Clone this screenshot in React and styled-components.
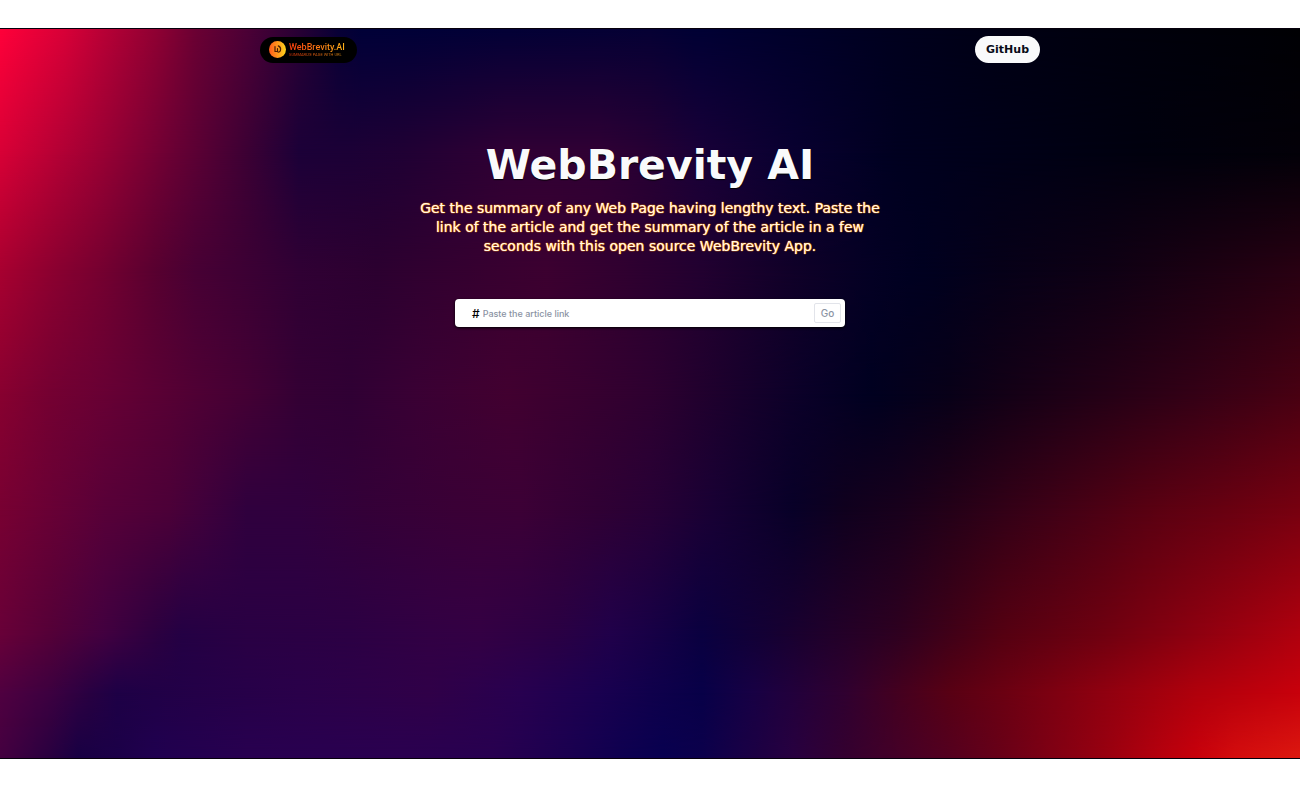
import React from 'react'
import { useState } from "react";
import styled, { createGlobalStyle } from 'styled-components'


const GlobalStyle = createGlobalStyle`
  * {
    box-sizing: border-box;
  }
  body {
    margin: 0;
    background-color: #ffffff;
    font-family: "DejaVu Sans", sans-serif;
  }
`;

// colours of the backdrop from top to bottom, every row fades into the next one
const rows = [
  { from: 0, to: 0, stops: "#ff003a 0%, #d80038 5%, #b80036 8%, #900033 12%, #6c0033 15%, #4c0036 19%, #280034 23%, #080036 26%, #000038 28%, #060034 50%, #000034 54%, #00002a 61%, #00001e 69%, #000014 77%, #00000e 85%, #000004 100%" },
  { from: 0, to: 17, stops: "#d80036 0%, #980034 8%, #6c0034 13%, #5c0034 15%, #3c0034 19%, #1c0038 23%, #1c0036 27%, #200034 31%, #280034 35%, #300034 39%, #300034 46%, #260034 50%, #180038 54%, #080030 61%, #000020 69%, #000018 77%, #00000e 88%, #030008 100%" },
  { from: 17, to: 33, stops: "#a80030 0%, #8c0030 4%, #740030 8%, #580030 12%, #480034 15%, #3c0034 19%, #300034 23%, #2c0030 29%, #340030 35%, #3c0030 42%, #300030 48%, #220030 54%, #100028 61%, #040024 67%, #000020 71%, #060018 77%, #0e0014 85%, #1a0012 92%, #280012 100%" },
  { from: 33, to: 50, stops: "#880030 0%, #740032 4%, #680034 8%, #500034 15%, #440034 19%, #340034 23%, #300034 27%, #3a0034 32%, #420030 39%, #380030 45%, #2e0030 50%, #18002c 57%, #0a0028 62%, #000020 67%, #080018 73%, #120016 77%, #240016 85%, #340016 92%, #480012 100%" },
  { from: 50, to: 66, stops: "#780032 0%, #640036 5%, #580038 8%, #4c0038 13%, #3e003c 16%, #30003e 19%, #30003e 23%, #340038 28%, #3a0036 35%, #3c0036 40%, #300034 46%, #280036 50%, #180034 55%, #080028 61%, #10001e 65%, #18001c 69%, #240018 73%, #400016 81%, #580012 88%, #780010 100%" },
  { from: 66, to: 83, stops: "#680038 0%, #540038 4%, #420040 8%, #2c0040 12%, #240044 14%, #2a0044 19%, #2c0044 27%, #320044 33%, #340044 37%, #2a0044 43%, #20004a 47%, #180046 50%, #0a0040 54%, #140034 59%, #240028 65%, #2e0020 69%, #400018 73%, #540012 77%, #700010 85%, #8e0010 92%, #b0000e 100%" },
  { from: 83, to: 91, stops: "#500040 0%, #3c0040 4%, #280042 7%, #1e0046 9%, #240048 15%, #2a004a 23%, #300048 33%, #280050 40%, #1a0050 46%, #10004c 50%, #080048 54%, #180044 58%, #300030 65%, #440020 69%, #580014 73%, #6a0012 77%, #900010 85%, #b0000c 92%, #c8000c 100%" },
  { from: 91, to: 100, stops: "#440040 0%, #280040 4%, #180044 6%, #1c0048 9%, #200050 12%, #280050 19%, #2a0050 31%, #280050 38%, #1c0050 43%, #0e0050 48%, #080050 51%, #0c004c 54%, #1c0044 58%, #280040 61%, #340030 65%, #440028 69%, #540020 73%, #680018 77%, #800014 81%, #980010 85%, #b4000e 89%, #c8000c 92%, #d40c0e 95%, #dc1810 100%" },
];

const Page = styled.div`
  min-height: 100vh;
  padding: 28px 0 29px;
  display: flex;
`;

const Main = styled.main`
  flex: 1;
  position: relative;
  isolation: isolate;
  overflow: hidden;
  border-top: 1px solid #06000c;
  border-bottom: 1px solid #06000c;
`;

const Layer = styled.div`
  position: absolute;
  inset: 0;
  z-index: -1;
  background: linear-gradient(to right, ${(props) => props.$stops});
  mask-image: ${(props) => props.$to > 0 && `linear-gradient(to bottom, transparent ${props.$from}%, #000 ${props.$to}%)`};
`;

const Container = styled.div`
  width: 60%;
  margin: 0 auto;
  display: flex;
  flex-direction: column;
  align-items: center;
`;

const Nav = styled.nav`
  width: 100%;
  padding-top: 7px;
  display: flex;
  align-items: center;
  justify-content: space-between;
`;

const Logo = styled.a`
  height: 26px;
  padding: 0 12px 0 9px;
  display: flex;
  align-items: center;
  gap: 3px;
  border-radius: 13px;
  background-color: #000000;
  text-decoration: none;
`;

const LogoText = styled.span`
  display: flex;
  flex-direction: column;
  font-family: Roboto, sans-serif;
`;

const LogoName = styled.span`
  font-size: 9px;
  line-height: 10px;
  font-weight: 500;
  color: transparent;
  background: linear-gradient(to right, #ff3d0c, #ffb31a);
  background-clip: text;
`;

const LogoTag = styled.span`
  font-size: 4px;
  line-height: 5px;
  text-transform: uppercase;
  white-space: nowrap;
  color: transparent;
  background: linear-gradient(to right, #e0340a, #c88416);
  background-clip: text;
`;

const GithubButton = styled.button`
  height: 27px;
  padding: 0 11px;
  border: none;
  border-radius: 14px;
  background-color: #f9fafb;
  color: #080c18;
  font-family: inherit;
  font-size: 11px;
  font-weight: 700;
  cursor: pointer;
`;

const Title = styled.h1`
  margin: 77px 0 0;
  font-size: 41px;
  line-height: 50px;
  font-weight: 700;
  color: #f9fafb;
  text-align: center;
  text-shadow: 0 1px 1px #000000;
`;

const Desc = styled.p`
  max-width: 468px;
  margin: 9px 0 0;
  font-size: 14px;
  line-height: 19px;
  color: #fffbe8;
  text-align: center;
  text-shadow: 0 0 1px #ff8a00, 0 0 1px #ff6a00, 0 0 1px #ff8a00;
`;

const Form = styled.form`
  width: 50%;
  height: 28px;
  margin-top: 43px;
  padding: 0 4px 0 17px;
  display: flex;
  align-items: center;
  gap: 3px;
  border-radius: 4px;
  background-color: #ffffff;
  box-shadow: 0 1px 3px #000000;
`;

const Hash = styled.label`
  font-family: Inter, sans-serif;
  font-size: 12px;
  font-weight: 500;
  color: #000000;
`;

const Input = styled.input`
  flex: 1;
  min-width: 0;
  padding: 0;
  border: none;
  outline: none;
  background-color: transparent;
  font-family: Inter, sans-serif;
  font-size: 9px;
  font-weight: 500;
  color: #111827;
  &::placeholder {
    color: #8b93a3;
    opacity: 1;
  }
`;

const GoButton = styled.button`
  width: 27px;
  height: 20px;
  padding: 0;
  border: 1px solid #e2e4ea;
  border-radius: 2px;
  background-color: #ffffff;
  color: #8b93a3;
  font-family: Inter, sans-serif;
  font-size: 10px;
  font-weight: 500;
  cursor: pointer;
`;


const LogoMark = () => (
  <svg width="17" height="17" viewBox="0 0 17 17" aria-hidden="true">
    <defs>
      <linearGradient id="mark" x1="0" y1="0" x2="1" y2="0">
        <stop offset="0" stopColor="#ff5a1c" />
        <stop offset="1" stopColor="#ffd51c" />
      </linearGradient>
    </defs>
    <circle cx="8.5" cy="8.5" r="8.5" fill="url(#mark)" />
    <path d="M6 5.500V10.500H8.500V7.500M9.300 4.900c1.800.8 2.600 2.400 2.200 4.200-.3 1.500-1.500 2.400-2.900 1.700" fill="none" stroke="#4a1c05" strokeWidth="1.200" strokeLinecap="round" strokeLinejoin="round" />
  </svg>
)

const App = () => {

    const [url, setUrl] = useState("");

    return (
      <Page>
        <GlobalStyle />
        <Main>
          {rows.map((row) => (
            <Layer key={row.to} $from={row.from} $to={row.to} $stops={row.stops} />
          ))}
          <Container>
            <Nav>
              <Logo href="/">
                <LogoMark />
                <LogoText>
                  <LogoName>WebBrevity.AI</LogoName>
                  <LogoTag>Summarize Page with URL</LogoTag>
                </LogoText>
              </Logo>
              <GithubButton type="button">GitHub</GithubButton>
            </Nav>
            <Title>WebBrevity AI</Title>
            <Desc>
              Get the summary of any Web Page having lengthy text. Paste the link of the article and get the summary of the article in a few seconds with this open source WebBrevity App.
            </Desc>
            <Form onSubmit={(e) => e.preventDefault()}>
              <Hash htmlFor="link">#</Hash>
              <Input id="link" type="url" placeholder="Paste the article link" value={url} onChange={(e) => setUrl(e.target.value)} />
              <GoButton type="submit">Go</GoButton>
            </Form>
          </Container>
        </Main>
      </Page>
    )
}

export default App
